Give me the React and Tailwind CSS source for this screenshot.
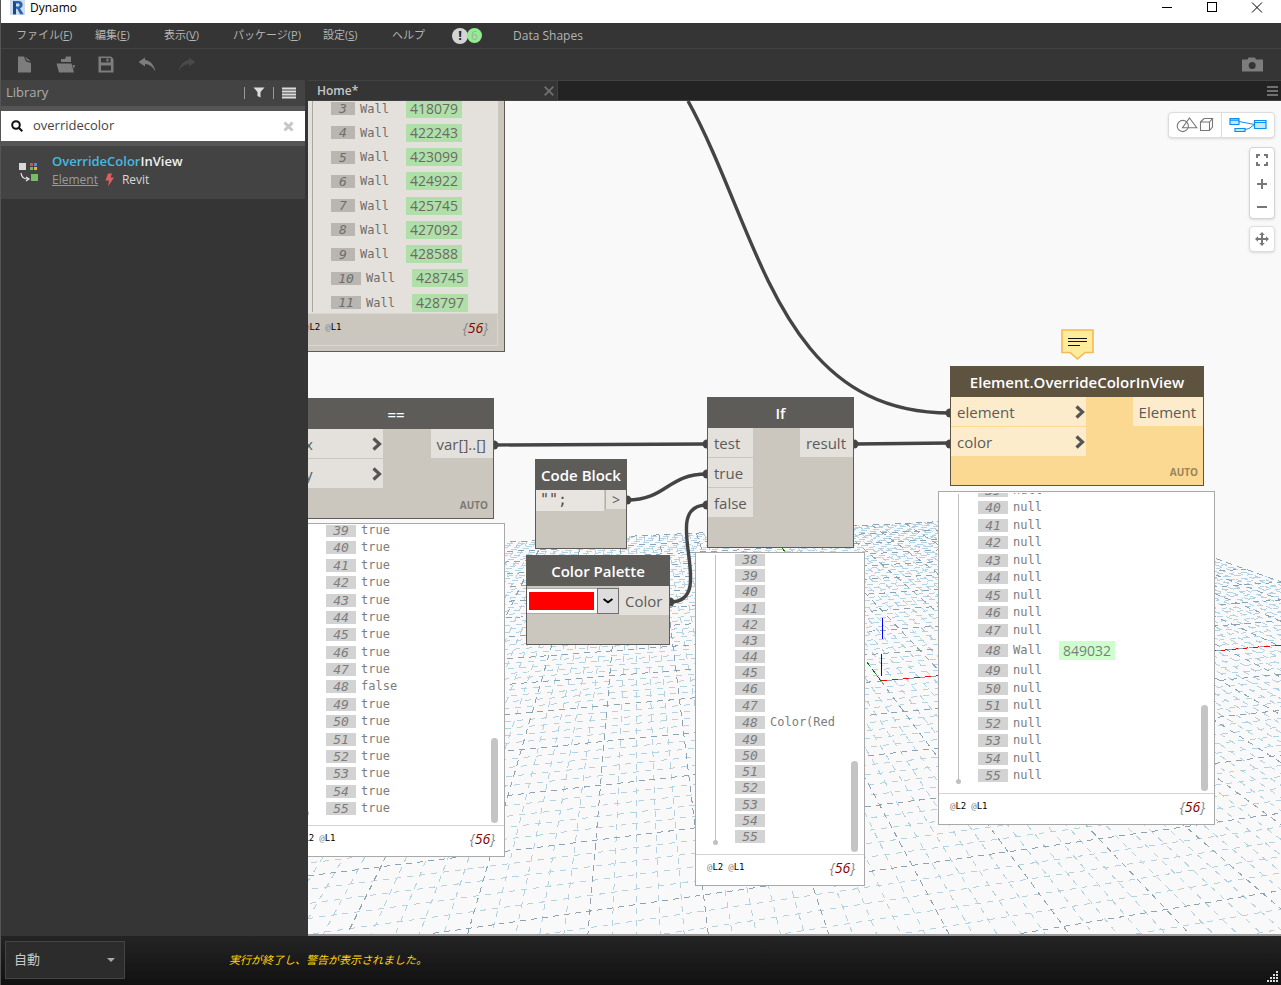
import React from "react";

/* ---------- perspective ground grid ---------- */

const STEP_X = 0.01747 / 5;
const STEP_Y = 0.0856 / 5;
const LIMIT = 50;
const NEAR = 0.5;

function weight(s, t) {
  return 1 + STEP_X * s + STEP_Y * t;
}

function project(s, t) {
  const w = weight(s, t);
  const x = (881 + STEP_X * s * 4525 + STEP_Y * t * 637) / w - 308;
  const y = 353 + 328 / w - 101;
  return [x, y];
}

function alongY(s) {
  const tMin = Math.max(-LIMIT, (NEAR - 1 - STEP_X * s) / STEP_Y);
  return [project(s, LIMIT), project(s, tMin)];
}

function alongX(t) {
  const sMin = Math.max(-LIMIT, (NEAR - 1 - STEP_Y * t) / STEP_X);
  if (sMin >= LIMIT) return null;
  return [project(sMin, t), project(LIMIT, t)];
}

function toPath(lines) {
  return lines
    .filter(Boolean)
    .map(([a, b]) => `M${a[0].toFixed(1)} ${a[1].toFixed(1)}L${b[0].toFixed(1)} ${b[1].toFixed(1)}`)
    .join("");
}

const steps = Array.from({ length: 2 * LIMIT + 1 }, (_, i) => i - LIMIT);
const minor = steps.filter((n) => n % 5 !== 0);
const major = steps.filter((n) => n % 5 === 0);
const minorX = toPath(minor.map(alongX));
const minorY = toPath(minor.map(alongY));
const majorX = toPath(major.map(alongX));
const majorY = toPath(major.map(alongY));
const redAxis = toPath([[project(0, 0), project(LIMIT, 0)]]);
const greenAxis = toPath([[project(0, 0), project(0, LIMIT)]]);

function Ground() {
  return (
    <svg className="absolute left-0 top-0 h-full w-full" aria-hidden="true" fill="none">
      <g shapeRendering="crispEdges" strokeWidth="1">
        <path d={minorX} stroke="#b5d2e2" strokeDasharray="6 6" />
        <path d={minorY} stroke="#b5d2e2" strokeDasharray="6 6" />
        <path d={majorX} stroke="#8ba3b3" strokeDasharray="6 5" />
        <path d={majorY} stroke="#8ba3b3" strokeDasharray="6 5" />
        <path d={redAxis} stroke="#ff0000" strokeDasharray="6 5" />
        <path d={greenAxis} stroke="#008000" strokeDasharray="6 3" />
        <path d="M574.5 517V538M573.5 553V575" stroke="#0000ff" />
      </g>
    </svg>
  );
}

function Wires() {
  const ends = [
    [186, 344], [399, 343], [319, 399], [399, 373], [362, 501], [399, 404], [546, 343], [642, 343], [642, 312],
  ];
  return (
    <svg className="absolute left-0 top-0 h-full w-full" aria-hidden="true" fill="none">
      <g stroke="#444444" strokeWidth="3.4">
        <path d="M380 0C452 131 470 312 642 312" />
        <path d="M186 344L399 343" />
        <path d="M319 399C359 399 359 373 399 373" />
        <path d="M362 501C412 501 349 404 399 404" />
        <path d="M546 343L642 342" />
      </g>
      {ends.map(([x, y]) => (
        <circle key={`${x}-${y}`} cx={x} cy={y} r="4.5" fill="#444444" />
      ))}
    </svg>
  );
}

/* ---------- nodes ---------- */

const themes = {
  normal: {
    box: "border-[#5e5c59] bg-[#cbc6be]",
    head: "bg-[#5e5c59]",
    port: "bg-[#e4e1dc]",
    auto: "text-[#7d7974]",
  },
  warning: {
    box: "border-[#5d533f] bg-[#fcd993]",
    head: "bg-[#5d533f]",
    port: "bg-[#fdeccb]",
    auto: "text-[#9a8458]",
  },
};

function Port({ label, theme, chevron, className = "" }) {
  return (
    <div className={`flex h-[29px] items-center justify-between pl-1.5 pt-px text-[15px] text-[#5b5b5b] ${themes[theme].port} ${className}`}>
      <span>{label}</span>
      {chevron && (
        <svg width="15" height="14" viewBox="1 0 15 14" fill="none" aria-hidden="true">
          <path d="M6.5 1.5L12.5 7L6.5 12.5" stroke="#555555" strokeWidth="3.2" />
        </svg>
      )}
    </div>
  );
}

function Node({ title, theme = "normal", place, inputs, output, auto, children }) {
  const t = themes[theme];
  return (
    <section className={`absolute flex flex-col border ${t.box} ${place}`}>
      <h2 className={`flex h-[30px] shrink-0 items-center justify-center whitespace-nowrap text-[15px] font-semibold text-white ${t.head}`}>
        {title}
      </h2>
      <div className="flex items-start justify-between">
        {inputs}
        {output}
        {children}
      </div>
      {auto && <span className={`mt-auto pb-1 pr-[5px] text-right text-[10px] leading-[18px] font-bold ${t.auto}`}>AUTO</span>}
    </section>
  );
}

/* ---------- preview bubbles ---------- */

function Levels() {
  return (
    <span className="flex gap-[5px] font-['DejaVu_Sans_Mono',monospace] text-[9px] text-black">
      <span><span className="text-[#888888]">@</span>L2</span>
      <span><span className="text-[#888888]">@</span>L1</span>
    </span>
  );
}

function Count() {
  return (
    <span className="text-[14px] leading-[18px] italic text-[#888888]">
      {"{"}
      <span className="text-[#8b0000]">56</span>
      {"}"}
    </span>
  );
}

function Row({ index, text, id, tall = "" }) {
  return (
    <li className={`flex shrink-0 items-center ${tall || "h-[13px]"}`}>
      <span className="w-[30px] bg-[#d3d3d3] text-center text-[13px] leading-[13px] italic text-[#7d7d7d]">{index}</span>
      <span className="ml-[5px] whitespace-pre text-[#7d7d7d]">{text}</span>
      {id && (
        <a href="#element" className="ml-[17px] bg-[#ccffcc] px-1 font-['Open_Sans',sans-serif] text-[14px] leading-[19px] text-[#7d7d7d]">
          {id}
        </a>
      )}
    </li>
  );
}

function Preview({ place, rows, listHeight, viewHeight, bar, stem, pad }) {
  return (
    <section className={`absolute flex flex-col border border-[#a9a9a9] bg-white ${place}`}>
      <div className={`relative flex flex-col justify-end overflow-hidden ${viewHeight} ${pad}`}>
        <span className={`absolute left-[19px] top-0.5 w-px bg-[#c0c0c0] ${stem}`}>
          <span className="absolute -bottom-1 -left-0.5 size-[5px] rounded-full bg-[#c0c0c0]" />
        </span>
        <ul className={`flex shrink-0 flex-col justify-between pl-[39px] font-['DejaVu_Sans_Mono',monospace] text-[12px] leading-[13px] ${listHeight}`}>
          {rows.map((r) => (
            <Row key={r.index} {...r} />
          ))}
        </ul>
        <span className="absolute inset-x-0 top-0 h-px bg-white" />
        <span className={`absolute right-1.5 w-[7px] rounded-full bg-[#c4c4c4] ${bar}`} />
      </div>
      <footer className="flex h-[31px] items-center justify-between border-t border-[#d3d3d3] pb-1 pl-[11px] pr-[9px]">
        <Levels />
        <Count />
      </footer>
    </section>
  );
}

const range = (from, to) => Array.from({ length: to - from + 1 }, (_, i) => from + i);

const equalRows = range(39, 55).map((index) => ({ index, text: index === 48 ? "false" : "true" }));
const ifRows = range(38, 55).map((index) => ({
  index,
  text: index === 48 ? "Color(Red" : "",
  tall: index === 48 ? "h-[15px]" : "",
}));
const overrideRows = range(39, 55).map((index) =>
  index === 48 ? { index, text: "Wall", id: "849032", tall: "h-[19px]" } : { index, text: "null" },
);

const walls = [
  [3, "418079"], [4, "422243"], [5, "423099"], [6, "424922"], [7, "425745"],
  [8, "427092"], [9, "428588"], [10, "428745"], [11, "428797"],
];

function WallList() {
  return (
    <section className="absolute -left-4 top-0 flex w-[213px] flex-col border-b border-r border-[#5e5c59] bg-[#cbc6be] pb-[5px] pr-1.5">
      <div className="flex h-[212px] flex-col justify-end overflow-hidden bg-[#e4e1dc] pb-px pl-5">
        <ul className="flex h-[213px] shrink-0 flex-col justify-between border-l border-[#aaa6a0] pl-[18px]">
          {walls.map(([index, id]) => (
            <li key={index} className="flex h-[19px] shrink-0 items-center font-['DejaVu_Sans_Mono',monospace] text-[12px] text-[#6f6d6a]">
              <span className={`bg-[#b9b6b1] text-center text-[13px] leading-[13px] italic ${index > 9 ? "w-[30px]" : "w-6"}`}>{index}</span>
              <span className="ml-[5px]">Wall</span>
              <a href="#element" className="ml-[17px] bg-[#b0dfa9] px-1 font-['Open_Sans',sans-serif] text-[14px] leading-[18px] text-[#6a6a66]">
                {id}
              </a>
            </li>
          ))}
        </ul>
      </div>
      <footer className="flex h-[33px] items-center justify-between border border-[#d8d6d2] pb-1 pl-[11px] pr-[9px]">
        <Levels />
        <Count />
      </footer>
    </section>
  );
}

function Comment() {
  return (
    <svg className="absolute left-[753px] top-[227px]" width="34" height="33" viewBox="0 0 34 33" aria-label="Comment">
      <path d="M1 2H32V24.500H24L16.5 31L9 24.500H1Z" fill="#ffeb9c" stroke="#f2bb52" strokeWidth="1.6" />
      <path d="M7 10.500H26M7 13.500H26M7 17.500H19" stroke="#111111" shapeRendering="crispEdges" />
    </svg>
  );
}

/* ---------- canvas controls ---------- */

const tool = "flex items-center justify-center text-[#777777]";

function ViewControls() {
  return (
    <div className="absolute right-1.5 top-[11px] flex flex-col items-end">
      <div className="flex h-[26px] rounded-sm border border-[#dddddd] bg-white shadow-sm">
        <button aria-label="3D preview" className={`${tool} w-[53px] border-r border-[#dddddd]`}>
          <svg width="38" height="16" viewBox="0 0 38 16" fill="none" stroke="currentColor" strokeWidth="1.1">
            <circle cx="6.8" cy="9" r="5.6" />
            <path d="M13.5 1L20.8 10.7H6.5Z" />
            <path d="M24.5 5H33.5V13.5H24.5ZM24.5 5L28 1.5H36.5L33.5 5M36.5 1.5V10L33.5 13.5" />
          </svg>
        </button>
        <button aria-label="Graph view" className={`${tool} w-[52px]`}>
          <svg width="38" height="16" viewBox="0 0 38 16" fill="#c6e6fb" stroke="#0a8ff0" strokeWidth="1.2">
            <path d="M10 4.5L25.5 7.5M16 12.5L20 11.5L25.5 7.5" fill="none" strokeWidth="1" />
            <path d="M1 1.5H10V7.5H1ZM1 3.2H10M6 11.5H16V14.5H6ZM25.5 3.5H37V11.5H25.5ZM25.5 5.5H37" />
          </svg>
        </button>
      </div>
      <div className="mt-[9px] flex w-[26px] flex-col rounded-sm border border-[#d4d4d4] bg-white shadow-sm">
        <button aria-label="Zoom to fit" className={`${tool} h-6`}>
          <svg width="12" height="12" viewBox="0 0 12 12" fill="none" stroke="currentColor" strokeWidth="2">
            <path d="M1 4V1H4M8 1H11V4M11 8V11H8M4 11H1V8" />
          </svg>
        </button>
        <button aria-label="Zoom in" className={`${tool} h-6`}>
          <svg width="10" height="10" viewBox="0 0 10 10" stroke="currentColor" strokeWidth="2">
            <path d="M0 5H10M5 0V10" />
          </svg>
        </button>
        <button aria-label="Zoom out" className={`${tool} h-[22px]`}>
          <svg width="10" height="10" viewBox="0 0 10 10" stroke="currentColor" strokeWidth="2">
            <path d="M0 5H10" />
          </svg>
        </button>
      </div>
      <button aria-label="Pan" className={`${tool} mt-[7px] size-[26px] rounded-sm border border-[#dddddd] bg-white shadow-sm`}>
        <svg width="14" height="14" viewBox="0 0 14 14" fill="currentColor">
          <path d="M7 0L9.8 3H8V6H11V4.2L14 7L11 9.8V8H8V11H9.8L7 14L4.2 11H6V8H3V9.8L0 7L3 4.2V6H6V3H4.2Z" />
        </svg>
      </button>
    </div>
  );
}

function Canvas() {
  return (
    <main className="relative min-h-0 flex-1 overflow-hidden border-b-2 border-[#999999] bg-[#f9f9f9]">
      <Ground />
      <Wires />
      <WallList />

      <Node
        title="=="
        place="-left-2.5 top-[297px] h-[121px] w-[196px]"
        auto
        inputs={
          <div className="flex w-[84px] flex-col gap-px">
            <Port label="x" theme="normal" chevron />
            <Port label="y" theme="normal" chevron />
          </div>
        }
        output={<Port label="var[]..[]" theme="normal" className="pr-[7px]" />}
      />
      <Preview
        place="-left-[22px] top-[422px] w-[219px]"
        rows={equalRows}
        viewHeight="h-[301px]"
        listHeight="h-[291px]"
        pad="pb-2.5"
        stem="bottom-[13px]"
        bar="bottom-0.5 h-[85px]"
      />

      <Node title="Code Block" place="left-[227px] top-[358px] h-[90px] w-[92px]">
        <textarea
          aria-label="Code"
          defaultValue={'"";'}
          className="h-[21px] w-[68px] resize-none overflow-hidden bg-[#e8e5e1] pl-1 font-['DejaVu_Sans_Mono',monospace] text-[15px] leading-[21px] text-[#5a4a40]"
        />
        <span className="flex h-[19px] w-[21px] items-center justify-center border-l border-[#b0b0b0] bg-[#e4e1dc] text-[14px] text-[#5b5b5b]">&gt;</span>
      </Node>

      <Node title="Color Palette" place="left-[218px] top-[454px] h-[90px] w-[144px]">
        <button aria-label="Pick a color" className="mt-0.5 flex h-[26px] w-[92px] items-stretch border-y border-[#a9a9b0] bg-white">
          <span className="my-[3px] ml-0.5 mr-[3px] flex-1 bg-[#ff0000]" />
          <span className="-my-px flex w-[22px] items-center justify-center border border-[#707070] bg-[#dddddd]">
            <svg width="10" height="6" viewBox="0 0 10 6" fill="none" stroke="#000000" strokeWidth="2">
              <path d="M0.5 1L5 4.3L9.5 1" />
            </svg>
          </span>
        </button>
        <Port label="Color" theme="normal" className="flex-1" />
      </Node>

      <Node
        title="If"
        place="left-[399px] top-[296px] h-[151px] w-[147px]"
        inputs={
          <div className="flex w-[45px] flex-col gap-px">
            <Port label="test" theme="normal" />
            <Port label="true" theme="normal" />
            <Port label="false" theme="normal" />
          </div>
        }
        output={<Port label="result" theme="normal" className="pr-[7px]" />}
      />
      <Preview
        place="left-[387px] top-[451px] w-[170px]"
        rows={ifRows}
        viewHeight="h-[301px]"
        listHeight="h-[290px]"
        pad="pb-[11px]"
        stem="bottom-[13px]"
        bar="bottom-0.5 h-[91px]"
      />

      <Comment />
      <Node
        title="Element.OverrideColorInView"
        theme="warning"
        place="left-[642px] top-[265px] h-[120px] w-[254px]"
        auto
        inputs={
          <div className="flex w-[135px] flex-col gap-px">
            <Port label="element" theme="warning" chevron />
            <Port label="color" theme="warning" chevron />
          </div>
        }
        output={<Port label="Element" theme="warning" className="pr-[7px]" />}
      />
      <Preview
        place="left-[630px] top-[390px] w-[277px]"
        rows={overrideRows}
        viewHeight="h-[301px]"
        listHeight="h-[298px]"
        pad="pb-[11px]"
        stem="bottom-[13px]"
        bar="bottom-0.5 h-[86px]"
      />

      <ViewControls />
    </main>
  );
}

/* ---------- window chrome ---------- */

function TitleBar() {
  return (
    <header className="flex h-[23px] shrink-0 items-start bg-white pl-2 pr-px text-black">
      <svg width="17" height="16" viewBox="0 0 17 16" aria-hidden="true">
        <rect x="1" width="15" height="15" fill="#cfdcec" />
        <path d="M4 1H9.5C12.3 1 13.6 2.6 13.6 4.8C13.6 6.6 12.6 7.9 11 8.3L14.6 14.2H11.2L8.2 8.8H7V14.2H4ZM7 3.4V6.5H9C10 6.5 10.5 5.9 10.5 4.9C10.5 3.9 10 3.4 9 3.4Z" fill="#2566b0" />
        <path d="M4 1L7 3.4V14.2H4Z" fill="#174a86" />
      </svg>
      <h1 className="ml-1 flex-1 text-[12px] leading-4">Dynamo</h1>
      <div className="flex">
        <button aria-label="Minimize" className="flex h-[15px] w-[45px] items-center justify-center">
          <svg width="12" height="12" viewBox="0 0 12 12" stroke="currentColor" shapeRendering="crispEdges"><path d="M1 5.5H11" /></svg>
        </button>
        <button aria-label="Maximize" className="flex h-[15px] w-[45px] items-center justify-center">
          <svg width="12" height="12" viewBox="0 0 12 12" fill="none" stroke="currentColor" shapeRendering="crispEdges"><path d="M1.5 0.5H10.5V9.5H1.5Z" /></svg>
        </button>
        <button aria-label="Close" className="flex h-[15px] w-[46px] items-center justify-center">
          <svg width="12" height="12" viewBox="0 0 12 12" stroke="currentColor"><path d="M1 0.500L11 10.500M11 0.500L1 10.500" /></svg>
        </button>
      </div>
    </header>
  );
}

const menus = [
  { text: "ファイル", key: "F", width: "w-[79px]" },
  { text: "編集", key: "E", width: "w-[69px]" },
  { text: "表示", key: "V", width: "w-[69px]" },
  { text: "パッケージ", key: "P", width: "w-[90px]" },
  { text: "設定", key: "S", width: "w-[69px]" },
  { text: "ヘルプ", width: "w-[60px]" },
];

function MenuBar() {
  return (
    <nav className="flex h-[26px] shrink-0 items-center border-b border-[#424242] pl-[15px] text-[11px] text-[#b4b4b4]">
      {menus.map((m) => (
        <button key={m.text} className={`whitespace-nowrap text-left ${m.width}`}>
          {m.text}
          {m.key && <>(<u>{m.key}</u>)</>}
        </button>
      ))}
      <button aria-label="Notifications: 6" className="flex w-[61px] items-center">
        <span className="flex size-4 items-center justify-center rounded-full bg-[#d3d3d3] text-[13px] font-bold text-[#222222]">!</span>
        <span className="-ml-px flex size-[15px] items-center justify-center rounded-full bg-[#90ee90] text-[12px] text-[#aaaaaa]">6</span>
      </button>
      <button className="text-[12px]">Data Shapes</button>
    </nav>
  );
}

function Toolbar() {
  return (
    <div className="flex h-[31px] shrink-0 items-center pl-4 pr-[18px] text-[#7d7d7d]">
      <button aria-label="New" className="w-[39px]">
        <svg width="15" height="17" viewBox="0 0 15 17" fill="currentColor"><path d="M1 0.5H7L9 5.5L14 7V16.5H1ZM8 0.5L14 5.5L10 4.6Z" /></svg>
      </button>
      <button aria-label="Open" className="w-[41px]">
        <svg width="20" height="17" viewBox="0 0 20 17" fill="currentColor"><path d="M5 3H9L10 0.5H15V6H5ZM0.5 7.5H15.5L18 16.500H3ZM16.5 9H19L18 13Z" /></svg>
      </button>
      <button aria-label="Save" className="w-[41px]">
        <svg width="18" height="17" viewBox="0 0 18 17" fill="currentColor"><path fillRule="evenodd" d="M1.500 0.500H14L16.500 3V16.500H1.500ZM4 2V6.500H13.500V2ZM4 9.500V14.500H14V9.500ZM9.500 2.500H11.500V5.500H9.500Z" /></svg>
      </button>
      <button aria-label="Undo" className="w-10">
        <svg width="18" height="15" viewBox="0 0 18 15" fill="currentColor"><path d="M0.5 5L7 0.5V3C12 3.5 16 7.5 17.5 14.5C14.5 9.5 11.5 7.3 7 7V9.5Z" /></svg>
      </button>
      <button aria-label="Redo" className="text-[#464a4a]">
        <svg width="18" height="15" viewBox="0 0 18 15" fill="currentColor"><path d="M17.5 5L11 0.5V3C6 3.5 2 7.5 0.5 14.5C3.5 9.5 6.5 7.3 11 7V9.5Z" /></svg>
      </button>
      <button aria-label="Export image" className="ml-auto">
        <svg width="22" height="15" viewBox="0 0 22 15" fill="currentColor"><path fillRule="evenodd" d="M1 2.5H6.5L7.5 0.5H14L15 2.5H22V14.5H1ZM11.2 5A3.5 3.5 0 1 0 11.2 12A3.5 3.5 0 1 0 11.2 5Z" /></svg>
      </button>
    </div>
  );
}

function Library() {
  return (
    <aside className="flex w-[304px] shrink-0 flex-col border-t border-[#424242]">
      <div className="flex h-[25px] items-center bg-[#434343] pb-0.5 pl-[5px] pr-[9px] text-[13px] text-[#adadad]">
        <h2 className="flex-1">Library</h2>
        <span className="h-3 w-px bg-[#999999]" />
        <button aria-label="Filter" className="mx-2">
          <svg width="12" height="11" viewBox="0 0 12 11" fill="#dddddd"><path d="M0.5 0.5H11.5L7.5 5V10.5L4.5 9V5Z" /></svg>
        </button>
        <span className="h-3 w-px bg-[#999999]" />
        <button aria-label="Layout" className="ml-2">
          <svg width="14" height="12" viewBox="0 0 14 12" stroke="#dddddd" strokeWidth="1.8"><path d="M0 1.5H14M0 4.5H14M0 7.5H14M0 10.5H14" /></svg>
        </button>
      </div>
      <div className="flex h-10 items-center border-y-[5px] border-[#555555] bg-white px-2.5">
        <svg width="12" height="12" viewBox="0 0 12 12" fill="none" stroke="#111111" strokeWidth="2" aria-hidden="true">
          <circle cx="5" cy="5" r="3.8" />
          <path d="M7.8 7.8L11.3 11.3" />
        </svg>
        <input aria-label="Search library" defaultValue="overridecolor" className="ml-2.5 min-w-0 flex-1 text-[13px] text-[#444444] outline-none" />
        <button aria-label="Clear search" className="mr-px">
          <svg width="11" height="11" viewBox="0 0 11 11" stroke="#c6c6c6" strokeWidth="3"><path d="M1.5 1.5L9.5 9.5M9.5 1.5L1.5 9.5" /></svg>
        </button>
      </div>
      <div className="flex h-[53px] items-center bg-[#434343] pl-[18px]">
        <svg width="20" height="19" viewBox="0 0 20 19" aria-hidden="true">
          <path d="M0 0H7V7H0Z" fill="#d8d8d8" />
          <path d="M11 0H14V3H11Z" fill="#d05050" />
          <path d="M15 0H18V3H15Z" fill="#4a90e0" />
          <path d="M11 4H14V7H11Z" fill="#70b860" />
          <path d="M15 4H18V7H15Z" fill="#f0b040" />
          <path d="M12 11H19V18H12Z" fill="#78bc68" />
          <path d="M2 10C2.500 14 5 16 8.500 16M7 14L10 16L7 18" fill="none" stroke="#e8e8e8" strokeWidth="1.2" />
        </svg>
        <div className="ml-[13px] pb-1">
          <p className="text-[13px] leading-[18px] font-semibold text-[#f0f0f0]"><span className="text-[#46b9e0]">OverrideColor</span>InView</p>
          <p className="flex items-center text-[12px] leading-5 text-[#d8d8d8]">
            <a href="#element" className="text-[#9a9a9a] underline">Element</a>
            <svg className="ml-[7px] mr-2" width="9" height="14" viewBox="0 0 9 14" fill="#e06060" aria-hidden="true"><path d="M3 0.500H7L5.500 4.500H9L3 13.500L4 7.500H0.500Z" /></svg>
            Revit
          </p>
        </div>
      </div>
    </aside>
  );
}

function Tabs() {
  return (
    <div className="flex h-[21px] shrink-0 border-y border-[#424242] bg-[#232323]">
      <div className="flex w-[250px] items-center border-r border-[#424242] bg-[#353535] pl-[9px] pr-[3px]">
        <button className="flex-1 text-left text-[12px] font-semibold text-[#c8c8c8]">Home*</button>
        <button aria-label="Close tab">
          <svg width="10" height="10" viewBox="0 0 10 10" stroke="#707070" strokeWidth="1.8"><path d="M0.7 0.7L9.300 9.300M9.300 0.700L0.700 9.300" /></svg>
        </button>
      </div>
      <button aria-label="Workspace list" className="ml-auto mr-[3px]">
        <svg width="11" height="10" viewBox="0 0 11 10" stroke="#707070" strokeWidth="1.800"><path d="M0 1H11M0 5H11M0 9H11" /></svg>
      </button>
    </div>
  );
}

function StatusBar() {
  return (
    <footer className="flex h-[49px] shrink-0 items-end bg-linear-to-b from-[#242424] to-[#111111] pl-1">
      <div className="relative mb-1.5 h-[38px] w-[120px]">
        <select aria-label="Run mode" className="h-full w-full appearance-none border border-[#444444] bg-[#2c2c2c] pl-2 text-[13px] text-[#c8c8c8]">
          <option>自動</option>
        </select>
        <svg className="pointer-events-none absolute right-2.5 top-[17px]" width="8" height="4" viewBox="0 0 8 4" fill="#aaaaaa" aria-hidden="true"><path d="M0 0H8L4 4Z" /></svg>
      </div>
      <p className="mb-4 ml-[104px] flex-1 text-[11px] leading-[18px] italic text-[#ffd700]">実行が終了し、警告が表示されました。</p>
      <svg className="mb-0.5 mr-0.5" width="12" height="12" viewBox="0 0 12 12" fill="#dddddd" aria-hidden="true">
        <path d="M9 0H11V2H9ZM6 3H8V5H6ZM9 3H11V5H9ZM3 6H5V8H3ZM6 6H8V8H6ZM9 6H11V8H9ZM0 9H2V11H0ZM3 9H5V11H3ZM6 9H8V11H6ZM9 9H11V11H9Z" />
      </svg>
    </footer>
  );
}

export default function App() {
  return (
    <div className="flex h-screen flex-col border-l border-[#555555] bg-[#353535] font-['Open_Sans','Noto_Sans_CJK_JP',sans-serif]">
      <TitleBar />
      <MenuBar />
      <Toolbar />
      <div className="flex min-h-0 flex-1 gap-[3px]">
        <Library />
        <div className="flex min-w-0 flex-1 flex-col">
          <Tabs />
          <Canvas />
        </div>
      </div>
      <StatusBar />
    </div>
  );
}
